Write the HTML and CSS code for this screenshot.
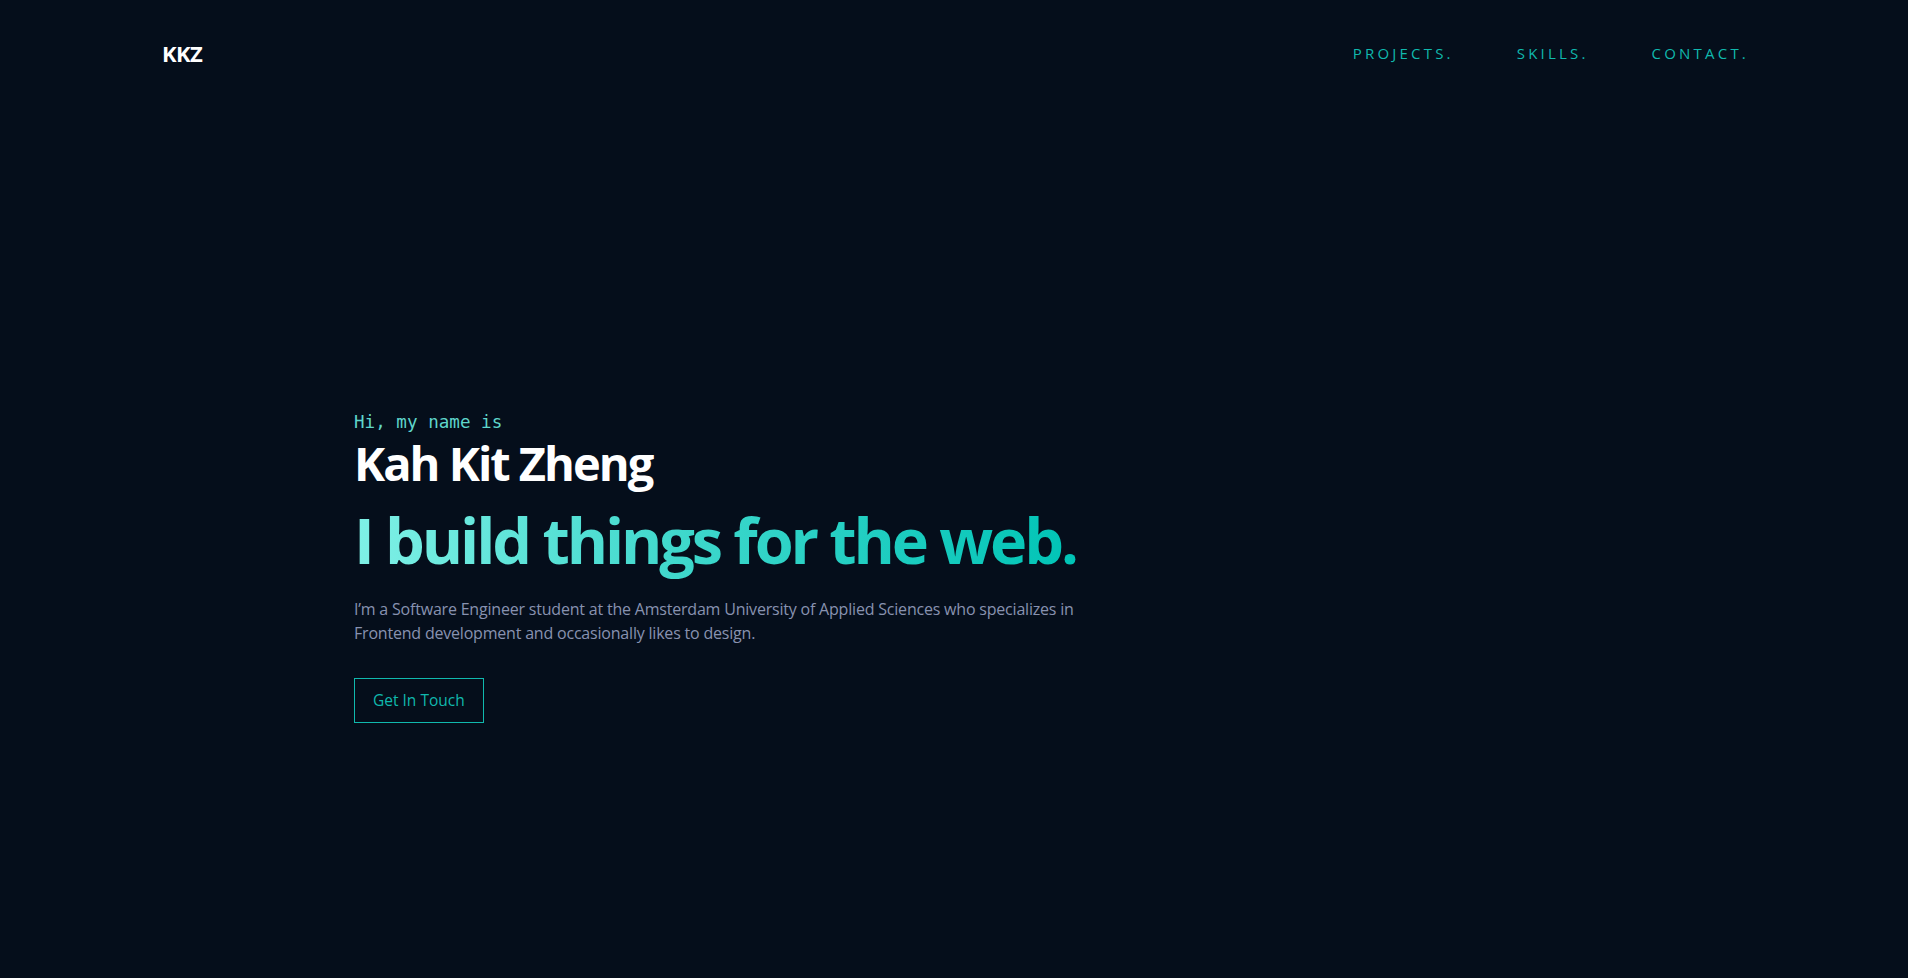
FILE: index.html
```html
<!DOCTYPE html>
<html lang="en">
<head>
<meta charset="utf-8">
<title>Kah Kit Zheng</title>
<link rel="stylesheet" href="styles.css">
</head>
<body>
<div class="page">
  <header class="header">
    <a class="logo" href="#">KKZ</a>
    <nav class="nav">
      <a href="#projects">PROJECTS.</a>
      <a href="#skills">SKILLS.</a>
      <a href="#contact">CONTACT.</a>
    </nav>
  </header>
  <main class="hero">
    <div class="hero-inner">
      <p class="intro">Hi, my name is</p>
      <h1 class="name">Kah Kit Zheng</h1>
      <h2 class="tagline">I build things for the web.</h2>
      <p class="bio">I’m a Software Engineer student at the Amsterdam University of Applied Sciences who specializes in Frontend development and occasionally likes to design.</p>
      <a class="btn" href="#contact">Get In Touch</a>
    </div>
  </main>
</div>
</body>
</html>
```
FILE: styles.css
```css
* { box-sizing: border-box; }
html, body { margin: 0; padding: 0; }
body {
  background: #050e1b;
  font-family: "Open Sans", "Noto Sans", sans-serif;
  color: #fff;
  min-height: 978px;
}
a { text-decoration: none; }
.page {
  display: flex;
  flex-direction: column;
  min-height: 978px;
}
.header {
  display: flex;
  justify-content: space-between;
  align-items: center;
  height: 106px;
  padding: 0 162px;
}
.logo {
  color: #fff;
  font-weight: 700;
  font-size: 22px;
  letter-spacing: -0.6px;
}
.nav {
  display: flex;
  gap: 66px;
}
.nav a {
  color: #10b8ad;
  font-size: 15px;
  font-weight: 500;
  letter-spacing: 3.2px;
  margin-right: -3px;
}
.hero {
  display: flex;
  justify-content: center;
  padding-top: 304px;
}
.hero-inner {
  width: 1200px;
}
.intro {
  margin: 0;
  font-family: "DejaVu Sans Mono", monospace;
  font-size: 17.6px;
  line-height: 24px;
  color: #5fd6cb;
}
.name {
  margin: -1px 0 0;
  font-size: 47px;
  font-weight: 700;
  line-height: 60px;
  letter-spacing: -2px;
  color: #fff;
}
.tagline {
  margin: 5px 0 0;
  font-size: 63px;
  font-weight: 700;
  line-height: 84px;
  letter-spacing: -3.1px;
  display: inline-block;
  background: linear-gradient(90deg, #7ff0e6 0%, #3fd8cc 45%, #00c4b6 100%);
  -webkit-background-clip: text;
  background-clip: text;
  color: transparent;
}
.bio {
  margin: 15px 0 0;
  max-width: 740px;
  font-size: 16px;
  line-height: 24px;
  letter-spacing: -0.2px;
  color: #8892b0;
}
.btn {
  display: inline-block;
  margin-top: 33px;
  padding: 0 18px;
  height: 45px;
  line-height: 43px;
  border: 1px solid #10b8ad;
  color: #10b8ad;
  font-size: 15.5px;
}
```
